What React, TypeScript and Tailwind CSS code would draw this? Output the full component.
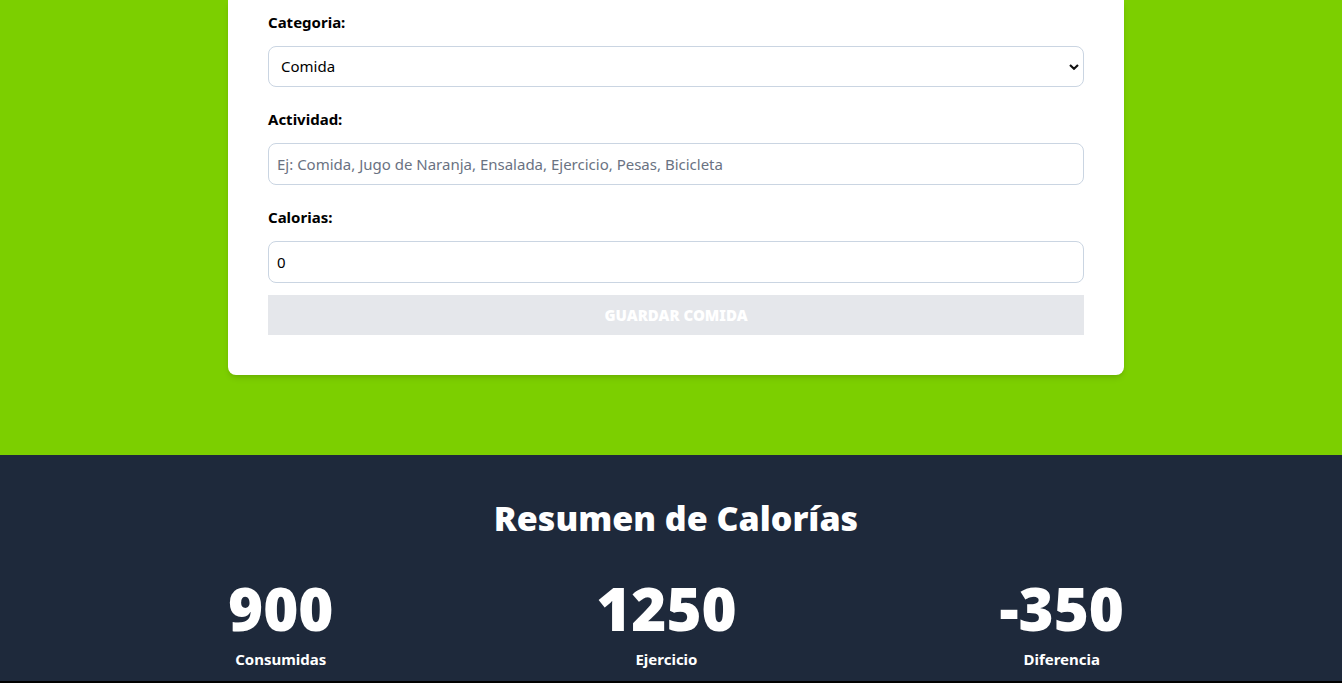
export default function App() {
  return (
    <div className="font-['Noto_Sans','Open_Sans',sans-serif]">
      <section className="bg-[#7ccf00] pb-20">
        <div className="mx-auto max-w-[906px] pl-[10px]">
          <form className="bg-white rounded-b-lg shadow-md px-10 pt-[10px] pb-10">
            <div className="grid grid-cols-1 gap-3 mb-5">
              <label className="font-bold text-black text-[15px] leading-6">Categoria:</label>
              <div className="relative">
                <select className="w-full h-[41px] appearance-none rounded-lg border border-slate-300 bg-white px-3 text-[15px] text-black outline-none">
                  <option>Comida</option>
                  <option>Ejercicio</option>
                </select>
                <svg
                  className="absolute right-[5px] top-1/2 -translate-y-1/2 pointer-events-none"
                  width="10"
                  height="7"
                  viewBox="0 0 10 7"
                >
                  <path d="M1 1.5 L5 5.2 L9 1.5" fill="none" stroke="#111" strokeWidth="2.2" />
                </svg>
              </div>
            </div>

            <div className="grid grid-cols-1 gap-3 mb-5">
              <label className="font-bold text-black text-[15px] leading-6">Actividad:</label>
              <input
                type="text"
                placeholder="Ej: Comida, Jugo de Naranja, Ensalada, Ejercicio, Pesas, Bicicleta"
                className="w-full h-[42px] rounded-lg border border-slate-300 px-2 text-[15px] outline-none placeholder:text-gray-500"
              />
            </div>

            <div className="grid grid-cols-1 gap-3">
              <label className="font-bold text-black text-[15px] leading-6">Calorias:</label>
              <input
                type="number"
                defaultValue={0}
                className="w-full h-[42px] rounded-lg border border-slate-300 px-2 text-[15px] text-black outline-none"
              />
            </div>

            <button
              type="button"
              disabled
              className="mt-3 w-full h-10 bg-gray-200 text-white font-black uppercase text-[15px]"
            >
              Guardar Comida
            </button>
          </form>
        </div>
      </section>

      <section className="bg-[#1e293b] h-[226px] pt-[43px]">
        <h2 className="pl-[10px] text-center text-[34px] leading-10 font-black text-white">Resumen de Calorías</h2>
        <div className="mx-auto max-w-[906px] pl-[10px] mt-10">
          <div className="flex justify-between">
            {[
              { value: 900, label: "Consumidas" },
              { value: 1250, label: "Ejercicio" },
              { value: -350, label: "Diferencia" },
            ].map((item) => (
              <div key={item.label} className="flex flex-col items-center">
                <span className="text-6xl leading-none font-black text-white">{item.value}</span>
                <span className="mt-[9px] text-[15px] font-bold text-white leading-6">{item.label}</span>
              </div>
            ))}
          </div>
        </div>
      </section>
      <div className="h-[2px] bg-black" />
    </div>
  );
}
